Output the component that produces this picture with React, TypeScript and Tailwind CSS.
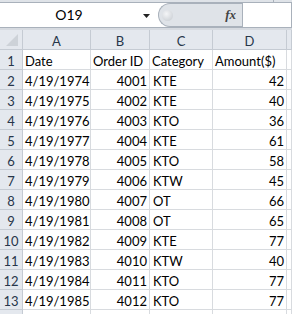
import React from 'react';

const rows: [string, number, string, number][] = [
  ['4/19/1974', 4001, 'KTE', 42],
  ['4/19/1975', 4002, 'KTE', 40],
  ['4/19/1976', 4003, 'KTO', 36],
  ['4/19/1977', 4004, 'KTE', 61],
  ['4/19/1978', 4005, 'KTO', 58],
  ['4/19/1979', 4006, 'KTW', 45],
  ['4/19/1980', 4007, 'OT', 66],
  ['4/19/1981', 4008, 'OT', 65],
  ['4/19/1982', 4009, 'KTE', 77],
  ['4/19/1983', 4010, 'KTW', 40],
  ['4/19/1984', 4011, 'KTO', 77],
  ['4/19/1985', 4012, 'KTO', 77],
];

const cols = ['A', 'B', 'C', 'D', ''];

const grid = 'grid grid-cols-[23px_68px_59px_63px_74px_1fr] auto-rows-[20px]';
const head = 'bg-[#e4e8ee] border-r border-b border-[#c5cbd3] text-[#27364a] text-center leading-[16px] pt-[3px]';
const cell = 'border-r border-b border-[#d8dbdf] leading-[16px] pt-[3px] px-[2px] whitespace-nowrap overflow-hidden';

const App = () => {
  return (
    <div className="w-[292px] h-[314px] overflow-hidden bg-white font-['Lato',sans-serif] text-[13px] text-black">
      {/* ribbon edge */}
      <div className="flex h-[3px] bg-[#dfe3e8] border-b border-[#a9b1bb]">
        <div className="w-[273px]" />
        <div className="w-px bg-[#a9b1bb]" />
      </div>

      {/* name box + formula bar */}
      <div className="flex h-[25px] border-b border-[#a9b1bb] bg-white">
        <div className="w-[158px] flex items-center">
          <div className="w-[138px] text-center text-[14px] leading-none">O19</div>
          <svg width="7" height="4" viewBox="0 0 7 4" className="ml-[5px] mt-[1px]">
            <path d="M0 0h7L3.5 4z" fill="#222" />
          </svg>
        </div>
        <div className="w-[84px] flex items-center rounded-l-full border border-r-0 border-[#a9b1bb] bg-[#dfe3e8]">
          <div className="ml-[3px] w-[11px] h-[11px] rounded-full bg-[radial-gradient(circle_at_40%_35%,#f4f5f7,#c4c9cf)]" />
          <div className="ml-auto mr-[6px] font-['Liberation_Serif',serif] italic font-bold text-[13px] text-[#444]">
            fx
          </div>
        </div>
        <div className="flex-1 border-l border-r border-[#a9b1bb] bg-white" />
      </div>

      <div className="h-[2px] bg-[#d6dae0]" />

      <div className={grid}>
        {/* column headers */}
        <div className={`${head} relative`}>
          <svg width="12" height="12" viewBox="0 0 12 12" className="absolute right-[4px] bottom-[3px]">
            <path d="M12 0v12H0z" fill="#cdd2d8" />
          </svg>
        </div>
        {cols.map((c, i) => (
          <div key={i} className={head}>
            {c}
          </div>
        ))}

        {/* header row */}
        <div className={head}>1</div>
        <div className={cell}>Date</div>
        <div className={cell}>Order ID</div>
        <div className={cell}>Category</div>
        <div className={cell}>Amount($)</div>
        <div className={cell} />

        {rows.map((r, i) => (
          <React.Fragment key={i}>
            <div className={head}>{i + 2}</div>
            <div className={`${cell} text-right`}>{r[0]}</div>
            <div className={`${cell} text-right`}>{r[1]}</div>
            <div className={`${cell} pl-[3px]`}>{r[2]}</div>
            <div className={`${cell} text-right`}>{r[3]}</div>
            <div className={cell} />
          </React.Fragment>
        ))}

        {/* row 14, only its top edge shows */}
        <div className={head} />
        <div className={cell} />
        <div className={cell} />
        <div className={cell} />
        <div className={cell} />
        <div className={cell} />
      </div>
    </div>
  );
};

export default App;
